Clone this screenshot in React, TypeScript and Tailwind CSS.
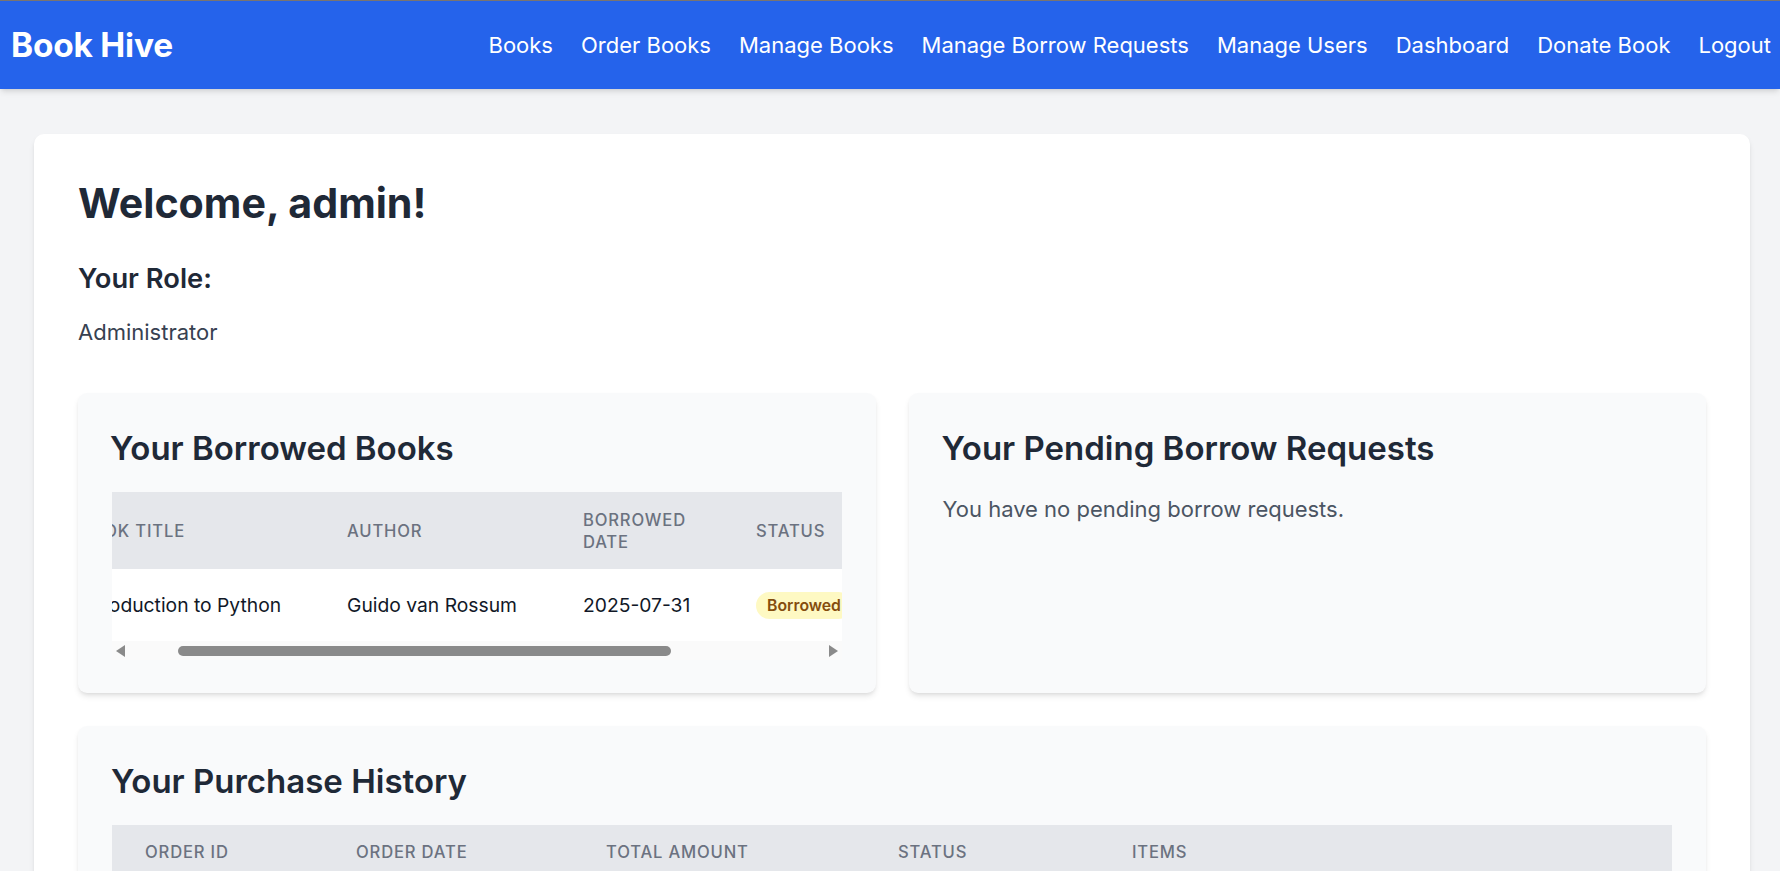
import { useState } from "react";

const navLinks = [
  "Books",
  "Order Books",
  "Manage Books",
  "Manage Borrow Requests",
  "Manage Users",
  "Dashboard",
  "Donate Book",
  "Logout",
];

type Borrowed = {
  title: string;
  author: string;
  borrowedDate: string;
  dueDate: string;
  status: string;
};

const borrowedBooks: Borrowed[] = [
  {
    title: "Introduction to Python",
    author: "Guido van Rossum",
    borrowedDate: "2025-07-31",
    dueDate: "2025-08-14",
    status: "Borrowed",
  },
];

function Navbar() {
  return (
    <nav className="bg-[#2563eb] border-t border-[#7a7470] shadow-md relative z-10">
      <div className="flex justify-between items-center h-[88px] pl-[11px] pr-[9px]">
        <a href="#" className="text-white font-bold text-[33.4px] tracking-[-0.2px]">
          Book Hive
        </a>
        <div className="flex items-center gap-[28px]">
          {navLinks.map((label) => (
            <a key={label} href="#" className="text-white text-[22px] hover:text-blue-100">
              {label}
            </a>
          ))}
        </div>
      </div>
    </nav>
  );
}

function FakeScrollbar() {
  // drawn horizontal scrollbar under the borrowed table
  return (
    <div className="h-[19px] bg-[#fafafa] flex items-center">
      <div className="w-[17px] flex justify-center">
        <svg width="9" height="12" viewBox="0 0 9 12">
          <polygon points="9,0 9,12 0,6" fill="#8a8a8a" />
        </svg>
      </div>
      <div className="flex-1 flex items-center">
        <div className="ml-[49px] w-[493px] h-[10px] rounded-full bg-[#8a8a8a]" />
      </div>
      <div className="w-[17px] flex justify-center">
        <svg width="9" height="12" viewBox="0 0 9 12">
          <polygon points="0,0 0,12 9,6" fill="#8a8a8a" />
        </svg>
      </div>
    </div>
  );
}

const th = "px-[33px] py-[16px] text-[16.6px] leading-[22px] font-medium text-[#6b7280] uppercase tracking-wider";
const td = "px-[33px] text-[19.3px] text-[#111827] whitespace-nowrap";

function BorrowedBooks() {
  return (
    <div className="bg-[#f9fafb] rounded-[9px] shadow-md pt-[35px] px-[34px] pb-[33px]">
      <h2 className="-ml-[2px] text-[33px] leading-[40px] font-semibold text-[#1f2937]">Your Borrowed Books</h2>
      <div className="mt-[24px]">
        <div className="overflow-hidden">
          <div className="-ml-[66px] w-[1034px]">
            <table className="table-fixed w-[1034px] text-left">
              <thead className="bg-[#e5e7eb]">
                <tr className="h-[77px]">
                  <th className={`w-[268px] ${th}`}>Book Title</th>
                  <th className={`w-[236px] ${th}`}>Author</th>
                  <th className={`w-[173px] ${th}`}>Borrowed Date</th>
                  <th className={`w-[170px] ${th}`}>Status</th>
                  <th className={`w-[187px] ${th}`}>Due Date</th>
                </tr>
              </thead>
              <tbody className="bg-white">
                {borrowedBooks.map((b) => (
                  <tr key={b.title} className="h-[72px]">
                    <td className={td}>{b.title}</td>
                    <td className={td}>{b.author}</td>
                    <td className={td}>{b.borrowedDate}</td>
                    <td className="px-[33px] whitespace-nowrap">
                      <span className="inline-block rounded-full bg-[#fef9c3] text-[#854d0e] font-semibold text-[15.8px] leading-[27px] px-[11px]">
                        {b.status}
                      </span>
                    </td>
                    <td className={td}>{b.dueDate}</td>
                  </tr>
                ))}
              </tbody>
            </table>
          </div>
        </div>
        <FakeScrollbar />
      </div>
    </div>
  );
}

function PendingRequests() {
  return (
    <div className="bg-[#f9fafb] rounded-[9px] shadow-md pt-[35px] px-[34px] pb-[33px]">
      <h2 className="-ml-[1px] text-[33px] leading-[40px] font-semibold text-[#1f2937]">Your Pending Borrow Requests</h2>
      <p className="mt-[26px] text-[22px] leading-[30px] text-[#4b5563]">You have no pending borrow requests.</p>
    </div>
  );
}

function PurchaseHistory() {
  const cols = [
    { label: "Order ID", w: "w-[211px]" },
    { label: "Order Date", w: "w-[250px]" },
    { label: "Total Amount", w: "w-[292px]" },
    { label: "Status", w: "w-[234px]" },
    { label: "Items", w: "" },
  ];
  return (
    <div className="bg-[#f9fafb] rounded-[9px] shadow-md pt-[35px] px-[34px] pb-[33px]">
      <h2 className="-ml-[1px] text-[33px] leading-[40px] font-semibold text-[#1f2937]">Your Purchase History</h2>
      <div className="mt-[24px] overflow-x-auto">
        <table className="w-full table-fixed text-left">
          <thead className="bg-[#e5e7eb]">
            <tr>
              {cols.map((c) => (
                <th key={c.label} className={`${c.w} ${th}`}>
                  {c.label}
                </th>
              ))}
            </tr>
          </thead>
          <tbody className="bg-white">
            <tr className="h-[72px]">
              <td className={td}>#1024</td>
              <td className={td}>2025-07-30</td>
              <td className={td}>$49.99</td>
              <td className={td}>Completed</td>
              <td className={td}>Clean Code (x1)</td>
            </tr>
          </tbody>
        </table>
      </div>
    </div>
  );
}

export default function App() {
  const [user] = useState({ name: "admin", role: "Administrator" });

  return (
    <div className="min-h-screen bg-[#f3f4f6] font-['Inter',sans-serif]">
      <Navbar />
      <main className="mt-[45px] ml-[34px] mr-[30px] pb-10">
        <div className="bg-white rounded-[10px] shadow-md pt-[47px] px-[44px] pb-[44px]">
          <h1 className="text-[41.2px] leading-[44px] font-bold text-[#1f2937]">Welcome, {user.name}!</h1>
          <h3 className="mt-[38px] text-[27.3px] leading-[32px] font-semibold text-[#1f2937]">Your Role:</h3>
          <p className="mt-[22px] text-[22px] leading-[30px] text-[#374151]">{user.role}</p>

          <div className="mt-[46px] grid grid-cols-2 gap-[33px]">
            <BorrowedBooks />
            <PendingRequests />
          </div>

          <div className="mt-[33px]">
            <PurchaseHistory />
          </div>
        </div>
      </main>
    </div>
  );
}
